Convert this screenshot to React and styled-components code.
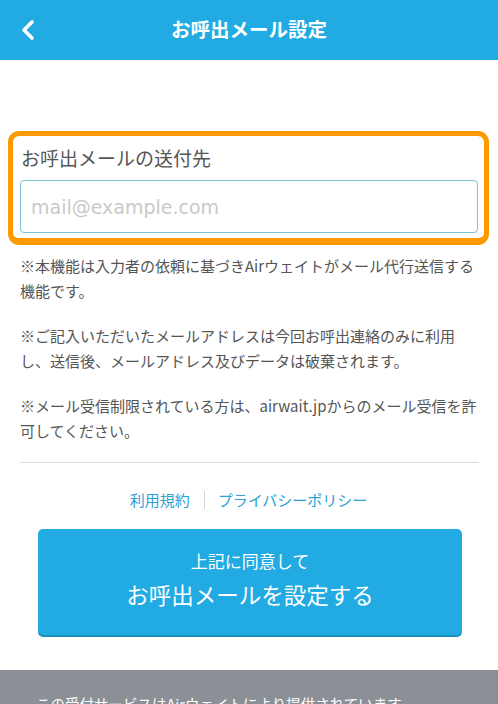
import React from 'react';
import styled, {createGlobalStyle} from 'styled-components';

const GlobalStyle = createGlobalStyle`
  html, body {
    margin: 0;
    padding: 0;
    background: #fff;
  }
  body {
    font-family: "Noto Sans CJK JP", "Noto Sans", sans-serif;
    color: #555;
  }
`;

const Page = styled.div`
  width: 498px;
  min-height: 704px;
  display: flex;
  flex-direction: column;
`;

const Header = styled.header`
  height: 60px;
  background: #22abe2;
  display: grid;
  grid-template-columns: 60px 1fr 60px;
  align-items: center;
`;

const BackButton = styled.button`
  border: none;
  background: none;
  padding: 0 0 0 20px;
  height: 60px;
  display: flex;
  align-items: center;
  cursor: pointer;
`;

const Title = styled.h1`
  margin: 0;
  text-align: center;
  color: #fff;
  font-size: 19.5px;
  font-weight: 700;
  line-height: 1;
  padding-bottom: 2px;
`;

const Main = styled.main`
  padding: 71px 9px 0 8px;
  display: flex;
  flex-direction: column;
`;

const AddressBox = styled.div`
  border: 5px solid #ff9900;
  border-bottom-width: 7px;
  border-radius: 11px;
  padding: 9px 6px 5px 7px;
  display: flex;
  flex-direction: column;
  gap: 9px;
`;

const Label = styled.label`
  font-size: 19px;
  line-height: 26px;
  color: #555;
  padding-left: 1px;
`;

const EmailInput = styled.input`
  box-sizing: border-box;
  width: 100%;
  height: 53px;
  border: 1px solid #7fc2d4;
  border-radius: 4px;
  padding: 0 10px;
  font-family: "DejaVu Sans", "Noto Sans", sans-serif;
  font-size: 19px;
  color: #333;
  outline: none;
  &::placeholder {
    color: #c9c9c9;
  }
`;

const Notes = styled.div`
  padding: 8px 10px 0 12px;
`;

const Note = styled.p`
  margin: 0 0 20px;
  font-size: 15px;
  line-height: 25px;
  color: #555;
  &:last-child {
    margin-bottom: 0;
  }
`;

const Divider = styled.hr`
  border: none;
  border-top: 1px solid #dcdcdc;
  margin: 19px 10px 0 12px;
`;

const Links = styled.nav`
  display: flex;
  justify-content: center;
  align-items: center;
  margin-top: 27px;
  height: 20px;
`;

const TextLink = styled.a`
  color: #2ba1d4;
  font-size: 15px;
  line-height: 20px;
  text-decoration: none;
`;

const Separator = styled.span`
  width: 1px;
  height: 18px;
  background: #d3d3d3;
  margin: 0 13px 0 14px;
`;

const SubmitButton = styled.button`
  box-sizing: border-box;
  margin: 19px 27px 0 30px;
  height: 106px;
  border: none;
  border-radius: 5px;
  background: #22abe2;
  box-shadow: 0 2px 0 #1b8fbf;
  color: #fff;
  font-family: "Noto Sans CJK JP", "Noto Sans", sans-serif;
  display: flex;
  flex-direction: column;
  align-items: center;
  justify-content: center;
  padding: 0 0 4px;
  cursor: pointer;
`;

const ButtonSub = styled.span`
  font-size: 17px;
  line-height: 24px;
`;

const ButtonMain = styled.span`
  font-size: 22.5px;
  line-height: 34px;
  margin-top: 4px;
`;

const Footer = styled.footer`
  margin-top: 35px;
  background: #8b9097;
  padding: 24px 20px 24px 36px;
  color: #fff;
  font-size: 14.5px;
  line-height: 20px;
  flex: 1;
`;

const ChevronLeft = () => (
    <svg width="16" height="22" viewBox="0 0 16 22" fill="none">
        <path d="M12 3 L4 11 L12 19" stroke="#fff" strokeWidth="3.6" strokeLinecap="round" strokeLinejoin="round" />
    </svg>
);

const notes = [
    '※本機能は入力者の依頼に基づきAirウェイトがメール代行送信する機能です。',
    '※ご記入いただいたメールアドレスは今回お呼出連絡のみに利用し、送信後、メールアドレス及びデータは破棄されます。',
    '※メール受信制限されている方は、airwait.jpからのメール受信を許可してください。',
];

const App = () => {
    return (
        <Page>
            <GlobalStyle />
            <Header>
                <BackButton aria-label="戻る">
                    <ChevronLeft />
                </BackButton>
                <Title>お呼出メール設定</Title>
                <span />
            </Header>
            <Main>
                <AddressBox>
                    <Label htmlFor="mail">お呼出メールの送付先</Label>
                    <EmailInput id="mail" type="email" placeholder="mail@example.com" />
                </AddressBox>
                <Notes>
                    {notes.map(n => (
                        <Note key={n}>{n}</Note>
                    ))}
                </Notes>
                <Divider />
                <Links>
                    <TextLink href="#">利用規約</TextLink>
                    <Separator />
                    <TextLink href="#">プライバシーポリシー</TextLink>
                </Links>
                <SubmitButton>
                    <ButtonSub>上記に同意して</ButtonSub>
                    <ButtonMain>お呼出メールを設定する</ButtonMain>
                </SubmitButton>
            </Main>
            <Footer>この受付サービスはAirウェイトにより提供されています。</Footer>
        </Page>
    );
};

export default App;
